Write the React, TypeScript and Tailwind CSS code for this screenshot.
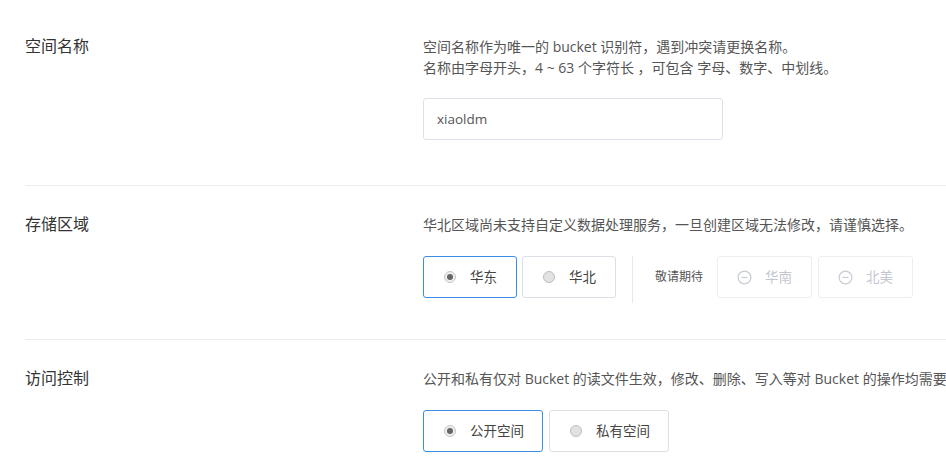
import { useState } from 'react'

const FONT = { fontFamily: '"Open Sans", "Noto Sans CJK SC", sans-serif' }

function Radio({ checked }: { checked: boolean }) {
  return checked ? (
    <span className="flex h-[12px] w-[12px] items-center justify-center rounded-full border border-[#c8c8c8] bg-[#eeeeee]">
      <span className="h-[6px] w-[6px] rounded-full bg-[#666]" />
    </span>
  ) : (
    <span className="h-[12px] w-[12px] rounded-full border border-[#bdbdbd] bg-[#e2e2e2]" />
  )
}

function Option({ label, checked, onClick, width }: { label: string; checked: boolean; onClick: () => void; width: string }) {
  return (
    <button
      onClick={onClick}
      className={`flex h-[42px] ${width} items-center gap-[14px] rounded-[3px] border pl-[20px] text-[13.5px] text-[#444] ${
        checked ? 'border-[#3a8ee6]' : 'border-[#dcdfe6]'
      }`}
    >
      <Radio checked={checked} />
      <span>{label}</span>
    </button>
  )
}

function Disabled({ label }: { label: string }) {
  return (
    <div className="flex h-[42px] w-[95px] items-center gap-[13px] rounded-[3px] border border-[#eceef3] pl-[19px] text-[13.5px] text-[#c4c7cf]">
      <svg width="15" height="15" viewBox="0 0 16 16" fill="none" stroke="#c9ccd4" strokeWidth="1.3">
        <circle cx="8" cy="8" r="6.8" />
        <line x1="4.8" y1="8" x2="11.2" y2="8" />
      </svg>
      <span>{label}</span>
    </div>
  )
}

function Row({ label, children, first, pb }: { label: string; children: React.ReactNode; first?: boolean; pb: string }) {
  return (
    <div className={`flex ${first ? 'pt-[36px]' : 'border-t border-[#ececec] pt-[28px]'} ${pb}`}>
      <div className="w-[398px] shrink-0 text-[16px] leading-[21px] text-[#333]">{label}</div>
      <div className="min-w-0 flex-1 overflow-hidden">{children}</div>
    </div>
  )
}

export default function App() {
  const [region, setRegion] = useState('east')
  const [access, setAccess] = useState('public')

  return (
    <div className="h-[463px] w-[946px] overflow-hidden bg-white pl-[25px]" style={FONT}>
      <Row label="空间名称" first pb="pb-[45px]">
        <p className="text-[14px] leading-[21px] text-[#555]">
          空间名称作为唯一的 bucket 识别符，遇到冲突请更换名称。
          <br />
          名称由字母开头，4 ~ 63 个字符长 ，可包含 字母、数字、中划线。
        </p>
        <input
          defaultValue="xiaoldm"
          className="mt-[20px] h-[42px] w-[300px] rounded-[3px] border border-[#dfe1ea] px-[13px] text-[13.5px] text-[#555] outline-none"
        />
      </Row>

      <Row label="存储区域" pb="pb-[36px]">
        <p className="whitespace-nowrap text-[14px] leading-[21px] text-[#555]">
          华北区域尚未支持自定义数据处理服务，一旦创建区域无法修改，请谨慎选择。
        </p>
        <div className="mt-[21px] flex items-start">
          <div className="flex gap-[5px]">
            <Option label="华东" width="w-[94px]" checked={region === 'east'} onClick={() => setRegion('east')} />
            <Option label="华北" width="w-[94px]" checked={region === 'north'} onClick={() => setRegion('north')} />
          </div>
          <div className="ml-[16px] mr-[22px] h-[47px] w-px bg-[#e6e8ee]" />
          <div className="flex h-[42px] items-center gap-[6px]">
            <span className="mr-[8px] text-[12px] text-[#555]">敬请期待</span>
            <Disabled label="华南" />
            <Disabled label="北美" />
          </div>
        </div>
      </Row>

      <Row label="访问控制" pb="pb-[40px]">
        <p className="whitespace-nowrap text-[14px] leading-[21px] text-[#555]">
          公开和私有仅对 Bucket 的读文件生效，修改、删除、写入等对 Bucket 的操作均需要身份验证。
        </p>
        <div className="mt-[21px] flex gap-[6px]">
          <Option label="公开空间" width="w-[120px]" checked={access === 'public'} onClick={() => setAccess('public')} />
          <Option label="私有空间" width="w-[120px]" checked={access === 'private'} onClick={() => setAccess('private')} />
        </div>
      </Row>
    </div>
  )
}
